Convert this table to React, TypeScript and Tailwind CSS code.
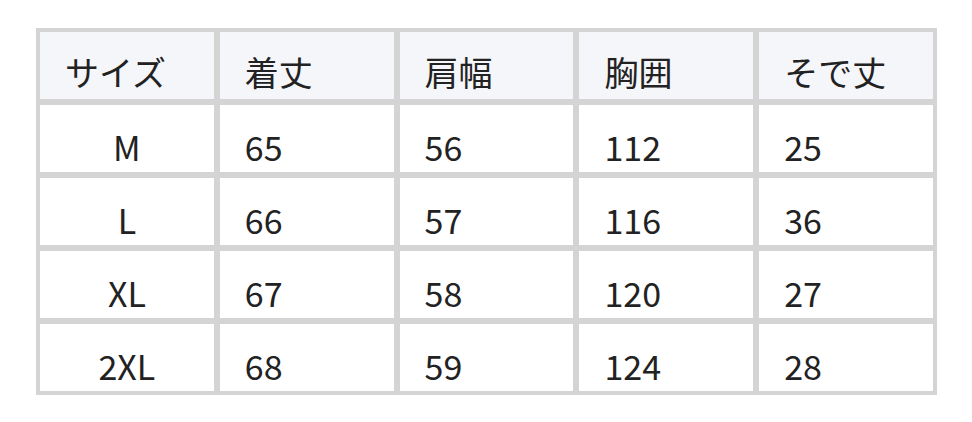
const headers = ["サイズ", "着丈", "肩幅", "胸囲", "そで丈"];

const rows = [
  ["M", "65", "56", "112", "25"],
  ["L", "66", "57", "116", "36"],
  ["XL", "67", "58", "120", "27"],
  ["2XL", "68", "59", "124", "28"],
];

export default function App() {
  return (
    <div className="w-[972px] h-[422px] bg-white pt-[28px] pl-[36px] font-['Noto_Sans_CJK_JP',sans-serif] text-[34px] text-[#222222]">
      <div className="w-[901px] bg-[#d4d4d4] p-[4px] grid grid-cols-5 gap-[6px]">
        {headers.map((h) => (
          <div key={h} className="h-[67px] bg-[#f5f6fa] pt-[20px] pl-[25px] leading-[40px]">
            {h}
          </div>
        ))}
        {rows.map((row) =>
          row.map((cell, i) => (
            <div
              key={row[0] + i}
              className={
                "h-[67px] bg-white pt-[22px] leading-[40px] " +
                (i === 0 ? "text-center" : "pl-[25px]")
              }
            >
              {cell}
            </div>
          ))
        )}
      </div>
    </div>
  );
}
